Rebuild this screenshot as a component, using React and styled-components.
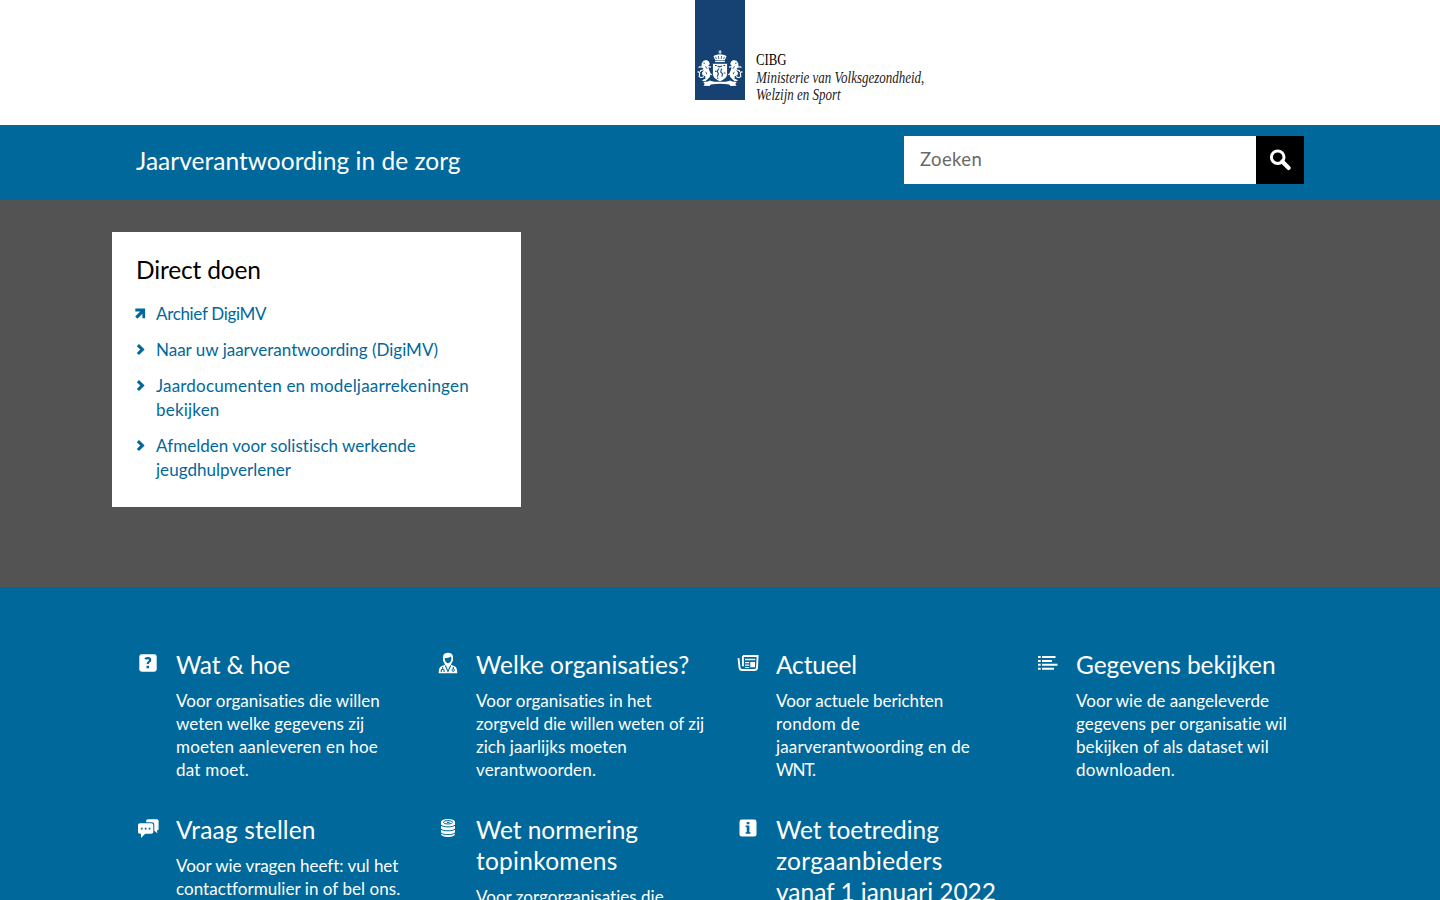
import React from "react";
import styled, { createGlobalStyle } from "styled-components";

const blue = "#01689b";
const navy = "#154273";

const Global = createGlobalStyle`
  * { box-sizing: border-box; }
  body { margin: 0; background: ${blue}; font-family: Lato, "Open Sans", sans-serif; }
  h1, h2, h3, p, ul { margin: 0; padding: 0; font-weight: 400; }
`;

const Page = styled.div`
  height: 900px;
  overflow: hidden;
  display: flex;
  flex-direction: column;
`;

const Line = styled.span`
  display: block;
  white-space: nowrap;
  font-variant-ligatures: none;
  letter-spacing: ${(p) => p.$track || 0}px;
`;

const Header = styled.header`
  flex: none;
  height: 125px;
  padding-left: 695px;
  display: flex;
  background: #fff;
`;

const Ribbon = styled.div`
  width: 50px;
  height: 100px;
  padding-top: 49px;
  background: ${navy};
`;

const Sender = styled.div`
  margin: 51px 0 0 11px;
  font: 16px/17.7px "Liberation Serif", serif;
  color: #111;
`;

const SenderLine = styled.div`
  white-space: nowrap;
  font-style: ${(p) => (p.$italic ? "italic" : "normal")};
  color: ${(p) => (p.$italic ? "#222" : "#000")};
  transform: scaleX(${(p) => p.$condense});
  transform-origin: left;
`;

const TitleBar = styled.div`
  flex: none;
  height: 75px;
  padding: 11px 136px 0;
  display: flex;
  justify-content: space-between;
  background: ${blue};
`;

const SiteTitle = styled.h1`
  margin-top: 9px;
  font-size: 24.5px;
  line-height: 31px;
  color: #fff;
`;

const Search = styled.div`
  width: 400px;
  height: 48px;
  display: flex;
  background: #fff;
`;

const SearchText = styled.div`
  flex: 1;
  padding-left: 16px;
  font-size: 18.5px;
  line-height: 47px;
  color: #696969;
`;

const SearchButton = styled.button`
  width: 48px;
  height: 48px;
  padding: 0;
  border: 0;
  display: flex;
  align-items: center;
  justify-content: center;
  background: #000;
`;

const Hero = styled.section`
  flex: none;
  height: 387px;
  padding: 32px 112px;
  background: #535353;
`;

const Card = styled.div`
  width: 409px;
  height: 275px;
  padding: 22px 24px;
  background: #fff;
`;

const CardTitle = styled.h2`
  margin-bottom: 17px;
  font-size: 24.5px;
  line-height: 31px;
  color: #000;
`;

const Links = styled.ul`
  list-style: none;
  display: flex;
  flex-direction: column;
  gap: 12px;
`;

const LinkRow = styled.li`
  display: flex;
  font-size: 17px;
  line-height: 24px;
  color: ${blue};
`;

const LinkMark = styled.svg`
  flex: none;
  width: 12px;
  height: 24px;
  margin: 0 10px 0 -2px;
`;

const Topics = styled.section`
  padding: 62px 120px 0 136px;
  display: grid;
  grid-template-columns: repeat(4, 300px);
  row-gap: 33px;
  color: #fff;
`;

const Topic = styled.article`
  display: flex;
`;

const TopicIcon = styled.svg`
  flex: none;
  width: 24px;
  height: 24px;
  margin: 2px 16px 0 0;
`;

const TopicTitle = styled.h3`
  margin-bottom: 9px;
  font-size: 24.5px;
  line-height: 31px;
`;

const TopicText = styled.div`
  font-size: 17px;
  line-height: 23px;
`;

const Lines = ({ items }) => items.map(([text, track]) => (
  <Line key={text} $track={track}>{text}</Line>
));

const Lion = () => (
  <g>
    <path d="M6.600 14.500l1.800-2.700 3.200-.8 2.300 1.400.9 2.600-1.400 1.800.6 3.600 1.400 3.600-.3 3.600-2.200 2.300-2.300 2H7.700l.6-1.500 2.200-.7-.4-2.600-2.700-.9-.4-2.400 1.700-2.400-.6-2.200-1.500-1.800z" />
    <path d="M8 18.200l-3.200-.4-1.300.7M9 20.500l-3.300 1.200-.6 1.300M9 27.500c-3 2-5.500.6-4.600-1.600.8-1.800-.4-3.600-1.900-2.600M13 17.500l3 .6M13.500 24l3.200 1.800M7.500 31.500l2.800.2" fill="none" stroke="#fff" strokeWidth="1.200" />
    <path d="M8.300 13.900l1.700.5M10.500 17.300l1.700 2.600M10.800 22.800l1 2.500" stroke={navy} strokeWidth=".8" />
  </g>
);

const Arms = () => (
  <svg width="50" height="40" viewBox="0 0 50 40" fill="#fff">
    <path d="M24.600 1h.9v1.600h1.100v.9h-1.100v2h-.9v-2h-1.100v-.9h1.100z" />
    <path d="M18.500 7.400c.7-1.500 3.500-2 6.500-2s5.800.5 6.500 2L29.800 11h-9.600z" />
    <path d="M21.500 10l-1-2.200M23.900 10l-.6-3M26.100 10l.6-3M28.500 10l1-2.200" fill="none" stroke={navy} strokeWidth=".8" />
    <path d="M20.200 11.600h9.600v1.500h-9.600z" />
    <Lion />
    <g transform="translate(50 0) scale(-1 1)"><Lion /></g>
    <path d="M17.500 14.300h15v10.500c0 4.100-3.700 6.200-7.500 8-3.800-1.800-7.500-3.900-7.500-8z" stroke={navy} strokeWidth=".9" />
    <path d="M20 16.500h1.700M28.500 16.500h1.700M20 22.200h1.700M28.800 24h1.500M22.500 17l2 .8 2.500-.8M24 19.500l-1.800 2.700 1.200 2.500-1.200 3M26.500 19.500l-.7 3.500 1.800 2-.8 2.700M22 29.200h1.500" fill="none" stroke={navy} strokeWidth="1.100" />
    <path d="M8.200 33l4.600-.4 2-1.200 4.200 1.300h12l4.200-1.300 2 1.200 4.600.4-1.500 1.700 1.200 2-6 .4-1.300-1.700c-5.600-1-12.800-1-18.400 0l-1.300 1.700-6-.4 1.200-2z" />
  </svg>
);

const MARKS = {
  out: <path d="M1.300 6.400h9.800v9.800H8.400v-4.500l-5 5-2.200-2.200 4.900-5.100H1.300z" />,
  next: <path d="M2.800 8.200l2.200-2.100 5.600 5.500L5 17.100 2.800 15l3.500-3.400z" />,
};

const ICONS = {
  help: (
    <>
      <rect x="3.300" y="3.300" width="17.400" height="17.400" rx="2.400" />
      <path d="M9.200 8.100c.9-1.500 5-1.500 5 .8 0 1.900-2.500 1.900-2.500 4.200" fill="none" stroke={blue} strokeWidth="2.200" />
      <rect x="10.500" y="14.800" width="2.500" height="2.500" fill={blue} />
    </>
  ),
  doctor: (
    <>
      <path d="M7 9.500V5.500C7 3 9.300 1.700 12 1.700s5 1.300 5 3.800v4l-1.500 3-.6 1.300 3.200 1.200c2.300.9 3.100 2.600 3.200 7.300H2.700c.1-4.700.9-6.400 3.200-7.300l3.200-1.200-.6-1.300z" />
      <path d="M8.700 7c2.800 0 4.500-.4 6.200-1.600l.5 1.800c0 2.700-1.500 5-3.400 5s-3.300-2.300-3.300-5.200z" fill={blue} />
      <path d="M9.300 14.500l2.700 6 2.700-6M6.700 16v2.500M5.300 21v-1.600c0-1.500 2.800-1.500 2.800 0V21M17.300 16v2" fill="none" stroke={blue} strokeWidth="1.100" />
      <circle cx="17.300" cy="19.200" r="1.200" fill="none" stroke={blue} />
    </>
  ),
  news: (
    <>
      <path d="M6.900 5h14.700l-.6 11.600c-.1 1.600-.9 2.400-2.500 2.400H6.300c-1.800 0-2.600-1.100-2.800-2.700L2.500 7.200M6.900 5v10.300" fill="none" stroke="#fff" strokeWidth="1.900" />
      <path d="M9 7.700h10.200v1.500H9zM9 11h4.200v1.300H9zM9 13.500h4.200v1.300H9zM14.300 11H19v5.200h-4.700zM9 16h4.200v1H9z" />
    </>
  ),
  list: (
    <path d="M2 5h2.700v2H2zM6 5h13.500v2H6zM2 8.900h2.700v2H2zM6 8.900h10v2H6zM2 12.800h2.700v2H2zM6 12.800h15.500v2H6zM2 16.700h2.700v2H2zM6 16.700h12v2H6z" />
  ),
  chat: (
    <>
      <path d="M10.200 6.300V5c0-1 .7-1.700 1.700-1.700h9c1 0 1.700.7 1.700 1.700v7.700c0 1-.6 1.600-1.600 1.700l.3 2.900-3-2.500V8.800c0-1.700-.9-2.500-2.500-2.500z" />
      <path d="M4 7.200h11.300c1.300 0 2 .7 2 2v6.600c0 1.300-.7 2-2 2H9.200L5 21.900v-4.100H4c-1.300 0-2-.7-2-2V9.200c0-1.300.7-2 2-2z" />
      <path d="M4.900 11.800h1.700v1.700H4.900zM8.800 11.800h1.700v1.700H8.800zM12.700 11.800h1.700v1.700h-1.700z" fill={blue} />
    </>
  ),
  coins: (
    <>
      <path d="M5 6c0-4 14-4 14 0v11.800c0 4.300-14 4.300-14 0z" />
      <ellipse cx="12" cy="6.300" rx="4.600" ry="1.700" fill="none" stroke={blue} strokeWidth="1" />
      <path d="M11 6.400h2.500M4.800 9.100c2.700 2.400 11.700 2.400 14.400 0M4.800 13c2.700 2.400 11.700 2.400 14.400 0M4.800 16.900c2.700 2.400 11.700 2.400 14.400 0" fill="none" stroke={blue} strokeWidth="1" />
    </>
  ),
  info: (
    <>
      <rect x="3.500" y="3.500" width="17" height="17" rx="2.200" />
      <path d="M10.700 6h2.700v2.200h-2.700zM9.600 9.600h3.800v6.700h1.100v1.500H9.600v-1.500h1.100v-5.200H9.600z" fill={blue} />
    </>
  ),
};

const LINKS = [
  { mark: "out", lines: [["Archief DigiMV", -0.33]] },
  { mark: "next", lines: [["Naar uw jaarverantwoording (DigiMV)", 0]] },
  { mark: "next", lines: [["Jaardocumenten en modeljaarrekeningen", 0.19], ["bekijken", 0.2]] },
  { mark: "next", lines: [["Afmelden voor solistisch werkende", 0.02], ["jeugdhulpverlener", 0.04]] },
];

const TOPICS = [
  {
    icon: "help",
    title: [["Wat & hoe", -0.14]],
    text: [["Voor organisaties die willen", 0.02], ["weten welke gegevens zij", 0], ["moeten aanleveren en hoe", 0.18], ["dat moet.", 0.24]],
  },
  {
    icon: "doctor",
    title: [["Welke organisaties?", 0.06]],
    text: [["Voor organisaties in het", 0.02], ["zorgveld die willen weten of zij", 0], ["zich jaarlijks moeten", 0.02], ["verantwoorden.", 0.16]],
  },
  {
    icon: "news",
    title: [["Actueel", -0.15]],
    text: [["Voor actuele berichten", -0.08], ["rondom de", 0.34], ["jaarverantwoording en de", 0.14], ["WNT.", -1.1]],
  },
  {
    icon: "list",
    title: [["Gegevens bekijken", -0.08]],
    text: [["Voor wie de aangeleverde", 0.06], ["gegevens per organisatie wil", 0.05], ["bekijken of als dataset wil", 0.1], ["downloaden.", 0.28]],
  },
  {
    icon: "chat",
    title: [["Vraag stellen", 0.15]],
    text: [["Voor wie vragen heeft: vul het", -0.03], ["contactformulier in of bel ons.", 0.05]],
  },
  {
    icon: "coins",
    title: [["Wet normering", -0.05], ["topinkomens", 0.25]],
    text: [["Voor zorgorganisaties die", 0.02]],
  },
  {
    icon: "info",
    title: [["Wet toetreding", -0.04], ["zorgaanbieders", 0.27], ["vanaf 1 januari 2022", -0.03]],
    text: [],
  },
];

export default function App() {
  return (
    <Page>
      <Global />
      <Header>
        <Ribbon><Arms /></Ribbon>
        <Sender>
          <SenderLine $condense={0.8}>CIBG</SenderLine>
          <SenderLine $italic $condense={0.811}>Ministerie van Volksgezondheid,</SenderLine>
          <SenderLine $italic $condense={0.811}>Welzijn en Sport</SenderLine>
        </Sender>
      </Header>
      <TitleBar>
        <SiteTitle><Line $track={0.02}>Jaarverantwoording in de zorg</Line></SiteTitle>
        <Search>
          <SearchText><Line $track={0.38}>Zoeken</Line></SearchText>
          <SearchButton aria-label="Zoeken">
            <svg width="24" height="24" viewBox="0 0 24 24" fill="none" stroke="#fff">
              <circle cx="9.700" cy="9.200" r="6.300" strokeWidth="3" />
              <path d="M14.200 13.600l6.500 6.300" strokeWidth="4.200" strokeLinecap="round" />
            </svg>
          </SearchButton>
        </Search>
      </TitleBar>
      <Hero>
        <Card>
          <CardTitle><Line $track={-0.16}>Direct doen</Line></CardTitle>
          <Links>
            {LINKS.map((l) => (
              <LinkRow key={l.lines[0][0]}>
                <LinkMark viewBox="0 0 12 24" fill={blue}>{MARKS[l.mark]}</LinkMark>
                <div><Lines items={l.lines} /></div>
              </LinkRow>
            ))}
          </Links>
        </Card>
      </Hero>
      <Topics>
        {TOPICS.map((t) => (
          <Topic key={t.icon}>
            <TopicIcon viewBox="0 0 24 24" fill="#fff">{ICONS[t.icon]}</TopicIcon>
            <div>
              <TopicTitle><Lines items={t.title} /></TopicTitle>
              <TopicText><Lines items={t.text} /></TopicText>
            </div>
          </Topic>
        ))}
      </Topics>
    </Page>
  );
}
